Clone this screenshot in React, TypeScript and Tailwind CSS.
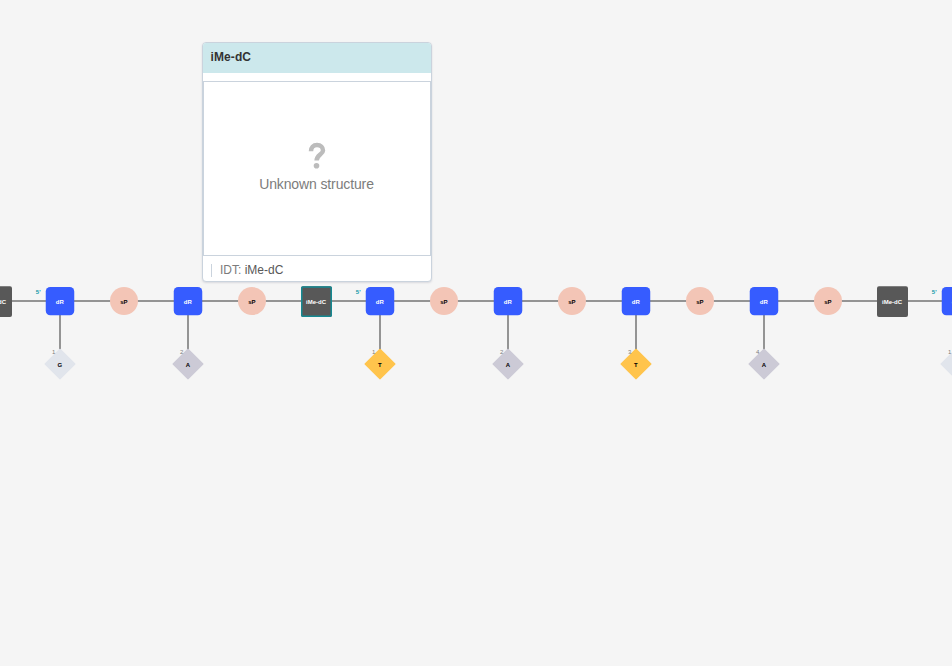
import React from 'react';

type Sugar = { x: number; base: 'G' | 'A' | 'T'; index: number; start?: boolean };

const baseColors = { G: '#e1e5ec', A: '#cccad6', T: '#ffc44c' };

const sugars: Sugar[] = [
  { x: 60, base: 'G', index: 1, start: true },
  { x: 188, base: 'A', index: 2 },
  { x: 380, base: 'T', index: 1, start: true },
  { x: 508, base: 'A', index: 2 },
  { x: 636, base: 'T', index: 3 },
  { x: 764, base: 'A', index: 4 },
  { x: 956, base: 'G', index: 1, start: true },
];

const phosphates = [124, 252, 444, 572, 700, 828];

const modifications = [
  { x: -3.5, selected: false },
  { x: 316.5, selected: true },
  { x: 892.5, selected: false },
];

function SugarNode({ x, base, index, start }: Sugar) {
  return (
    <g>
      <line x1={x} y1={315} x2={x} y2={350} stroke="#949494" strokeWidth={2} />
      <rect x={x - 14.25} y={286.9} width={28.5} height={28.4} rx={4.5} fill="#365cff" />
      <text x={x - 0.2} y={304} textAnchor="middle" className="fill-white text-[6px] font-bold">dR</text>
      {start && (
        <text x={x - 24.2} y={294} className="fill-[#0e98a8] text-[6px] font-bold">5&#39;</text>
      )}
      <path
        d={`M${x - 0.7} 349a1 1 0 0 1 1.4 0l14.6 14.6a.6 .6 0 0 1 0 .9l-14.6 14.6a1 1 0 0 1-1.4 0l-14.6-14.6a.6 .6 0 0 1 0-.9z`}
        fill={baseColors[base]}
      />
      <text x={x - 0.2} y={367} textAnchor="middle" className="fill-black text-[6px] font-bold">{base}</text>
      <text x={x - 8.1} y={354} className="fill-[#7c7c7c] text-[6px]">{index}</text>
    </g>
  );
}

function SequenceCanvas() {
  return (
    <svg width={952} height={666} viewBox="0 0 952 666" className="block">
      <line x1={0} y1={301} x2={952} y2={301} stroke="#949494" strokeWidth={2} />
      {sugars.map((s) => (
        <SugarNode key={s.x} {...s} />
      ))}
      {phosphates.map((x) => (
        <g key={x}>
          <circle cx={x} cy={301} r={14} fill="#f3c5b6" />
          <text x={x - 0.2} y={304} textAnchor="middle" className="fill-black text-[6px] font-bold">sP</text>
        </g>
      ))}
      {modifications.map(({ x, selected }) => (
        <g key={x}>
          <rect x={x - 15.5} y={286.2} width={31} height={30.8} rx={2} fill="#585858" />
          {selected && (
            <rect x={x - 14.75} y={286.95} width={29.5} height={29.3} rx={1} fill="none" stroke="#158992" strokeWidth={1.5} />
          )}
          <text x={x - 0.5} y={304} textAnchor="middle" className="fill-white text-[6px] font-bold">iMe-dC</text>
        </g>
      ))}
    </svg>
  );
}

function StructurePreview() {
  return (
    <div className="absolute left-[202px] top-[42px] flex h-60 w-[230px] flex-col overflow-hidden rounded border border-[#cad3dd] bg-white text-sm shadow-[0_1px_2px_rgba(103,104,132,0.2)]">
      <div className="flex h-[30px] shrink-0 items-center bg-[#cce8ec] px-[7.5px] pb-0.5 text-xs font-bold tracking-[0.1px] text-[#333]">
        iMe-dC
      </div>
      <div className="mt-2 flex h-[175px] shrink-0 flex-col items-center border border-[#cad3dd] pt-[60px]">
        <svg width="18" height="27" viewBox="0 0 18 27" className="block shrink-0" fill="none">
          <path d="M3 9.2C3 5.4 5.2 3.1 9 3.1S15 5.3 15 8.4C15 12.6 8.6 12.8 8.6 18.6" stroke="#bcbcbc" strokeWidth="4.5" />
          <circle cx="8.5" cy="23.8" r="2.8" fill="#bcbcbc" />
        </svg>
        <div className="mt-[5px] mr-px leading-5 tracking-[-0.12px] text-[#7c7c7c]">Unknown structure</div>
      </div>
      <div className="flex h-[25px] items-center px-2 pt-[3px]">
        <span className="mr-2 h-[13px] w-px bg-[#cad3dd]" />
        <span className="text-xs text-[#7c7c7c]">IDT:&nbsp;</span>
        <span className="text-xs text-[#585858]">iMe-dC</span>
      </div>
    </div>
  );
}

export default function App() {
  return (
    <main className="relative h-[666px] w-[952px] overflow-hidden bg-[#f5f5f5] font-['Liberation_Sans',Arial,sans-serif]">
      <SequenceCanvas />
      <StructurePreview />
    </main>
  );
}
